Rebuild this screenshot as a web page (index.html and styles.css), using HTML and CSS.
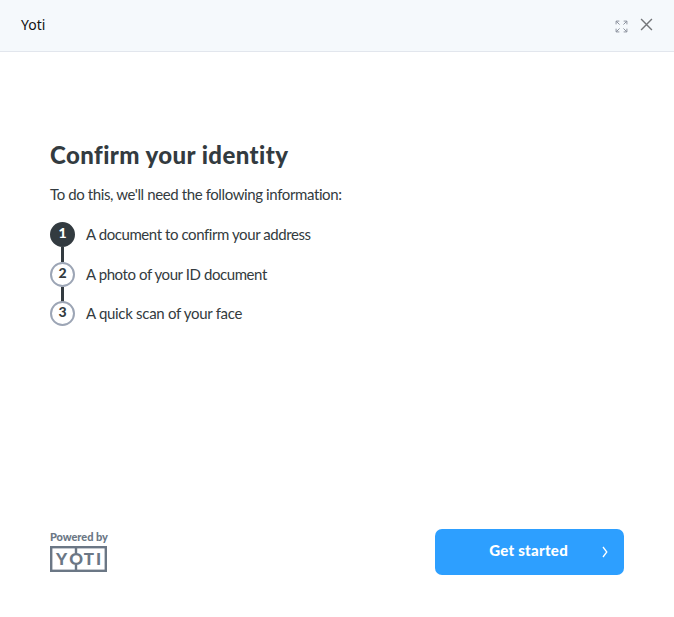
FILE: index.html
```html
<!DOCTYPE html>
<html lang="en">
<head>
  <meta charset="UTF-8" />
  <title>Yoti</title>
  <link rel="stylesheet" href="styles.css">
</head>
<body>
  <header class="topbar">
    <span class="topbar-title">Yoti</span>
    <div class="topbar-actions">
      <button class="icon-btn" aria-label="Expand">
        <svg class="icon-expand" viewBox="0 0 12 12" aria-hidden="true">
          <path d="M1 4V1h3M1 1l3.2 3.2M8 1h3v3M11 1L7.8 4.2M1 8v3h3M1 11l3.2-3.2M11 8v3H8M11 11L7.8 7.8"/>
        </svg>
      </button>
      <button class="icon-btn" aria-label="Close">
        <svg class="icon-close" viewBox="0 0 12 12" aria-hidden="true">
          <path d="M1 1l10 10M11 1L1 11"/>
        </svg>
      </button>
    </div>
  </header>

  <main class="content">
    <h1>Confirm your identity</h1>
    <p class="intro">To do this, we'll need the following information:</p>
    <ol class="steps">
      <li class="step active">
        <span class="step-number">1</span>
        <span class="step-label">A document to confirm your address</span>
      </li>
      <li class="step">
        <span class="step-number">2</span>
        <span class="step-label">A photo of your ID document</span>
      </li>
      <li class="step">
        <span class="step-number">3</span>
        <span class="step-label wide">A quick scan of your face</span>
      </li>
    </ol>
  </main>

  <footer class="footer">
    <div class="powered">
      <span class="powered-label">Powered by</span>
      <svg class="logo" viewBox="0 0 57 26" aria-label="Yoti">
        <rect x="1.2" y="1.2" width="54.6" height="23.6"/>
        <path d="M26 1v6.5M26 19v6"/>
        <text y="19" x="6 19.3 33.8 46">YOTI</text>
      </svg>
    </div>
    <button class="start-btn">
      <span class="start-label">Get started</span>
      <svg class="chevron" viewBox="0 0 6 12" aria-hidden="true">
        <path d="M1 1l3.8 5L1 11"/>
      </svg>
    </button>
  </footer>
</body>
</html>
```
FILE: styles.css
```css
*, *::before, *::after {
  box-sizing: border-box;
}

body {
  margin: 0;
  height: 617px;
  display: flex;
  flex-direction: column;
  font-family: Lato, "Open Sans", sans-serif;
  background: #fff;
  color: #333b40;
}

button {
  border: none;
  padding: 0;
  cursor: pointer;
  font-family: inherit;
}

h1, p, ol {
  margin: 0;
}

/* top bar */
.topbar {
  display: flex;
  justify-content: space-between;
  height: 52px;
  padding: 0 21px;
  background: #f5f9fc;
  border-bottom: 1px solid #e2e6ed;
}

.topbar-title {
  font-family: "Noto Sans", sans-serif;
  font-size: 14px;
  line-height: 50px;
  color: #111;
}

.topbar-actions {
  display: flex;
  align-items: center;
  gap: 12px;
  height: 50px;
}

.icon-btn {
  display: flex;
  background: transparent;
}

.icon-btn svg {
  fill: none;
}

.icon-expand {
  width: 13px;
  height: 13px;
  margin-top: 3px;
  stroke: #8b919c;
  stroke-width: 0.9;
}

.icon-close {
  width: 13px;
  height: 13px;
  margin-bottom: 1px;
  stroke: #737679;
  stroke-width: 1.3;
}

/* content */
.content {
  flex: 1;
  padding: 87px 50px 0;
}

h1 {
  font-size: 24px;
  font-weight: 900;
  line-height: 32px;
  letter-spacing: 0.42px;
  white-space: nowrap;
}

.intro {
  margin-top: 13px;
  font-size: 15px;
  line-height: 20px;
  letter-spacing: -0.39px;
  white-space: nowrap;
}

.steps {
  margin-top: 18px;
  padding: 0;
  list-style: none;
}

.step {
  display: flex;
  align-items: flex-start;
  gap: 11px;
  height: 39.5px;
  position: relative;
}

/* connector to the next step */
.step:not(:last-child)::after {
  content: "";
  position: absolute;
  left: 11px;
  top: 25px;
  width: 3px;
  height: 15px;
  background: #333b40;
}

.step-number {
  width: 25px;
  height: 25px;
  border: 2px solid #9ca5b5;
  border-radius: 50%;
  text-align: center;
  font-size: 14px;
  font-weight: 900;
  line-height: 17px;
}

.active .step-number {
  background: #333b40;
  border-color: #333b40;
  color: #fff;
}

.step-label {
  font-size: 15px;
  line-height: 25px;
  letter-spacing: -0.42px;
  white-space: nowrap;
}

.step-label.wide {
  letter-spacing: -0.3px;
}

/* footer */
.footer {
  display: flex;
  justify-content: space-between;
  align-items: flex-start;
  height: 88px;
  padding: 0 50px;
}

.powered {
  display: flex;
  flex-direction: column;
  padding-top: 1px;
  color: #6b7785;
}

.powered-label {
  font-size: 11px;
  font-weight: 900;
  line-height: 14px;
  letter-spacing: -0.06px;
  margin-bottom: 2px;
  white-space: nowrap;
}

.logo {
  width: 57px;
  height: 26px;
}

.logo rect, .logo path {
  fill: none;
  stroke: #6b7785;
  stroke-width: 2.4;
}

.logo text {
  font-size: 17px;
  font-weight: 900;
  fill: #6b7785;
}

.start-btn {
  display: flex;
  align-items: center;
  justify-content: flex-end;
  width: 189px;
  height: 46px;
  padding-right: 16px;
  border-radius: 7px;
  background: #2d9fff;
  color: #fff;
}

.start-label {
  margin-right: 34px;
  padding-bottom: 5px;
  font-size: 15px;
  font-weight: 900;
  line-height: 20px;
  letter-spacing: 0.28px;
}

.chevron {
  width: 6px;
  height: 12px;
  fill: none;
  stroke: #fff;
  stroke-width: 1.3;
}
```
